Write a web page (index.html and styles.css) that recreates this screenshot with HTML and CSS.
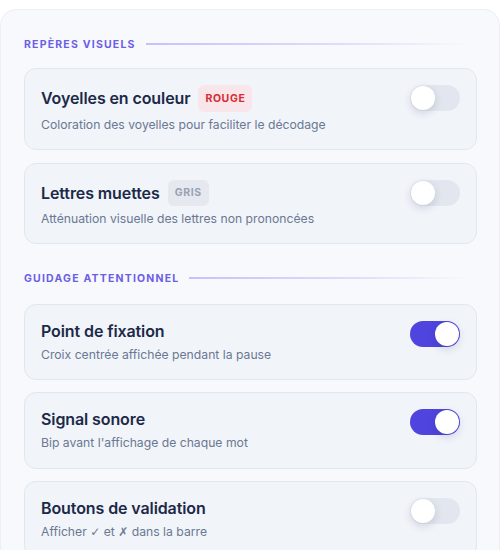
FILE: index.html
```html
<!DOCTYPE html>
<html lang="fr">
<head>
<meta charset="utf-8">
<link rel="stylesheet" href="styles.css">
</head>
<body>
<div class="panel">
  <div class="section-head section-first"><span class="section-title">Repères visuels</span><span class="section-line"></span></div>
  <div class="card">
    <div class="card-text">
      <div class="card-title-row"><span class="card-title">Voyelles en couleur</span><span class="badge badge-red">ROUGE</span></div>
      <div class="card-desc">Coloration des voyelles pour faciliter le décodage</div>
    </div>
    <span class="toggle"><span class="knob"></span></span>
  </div>
  <div class="card card-gap">
    <div class="card-text">
      <div class="card-title-row"><span class="card-title">Lettres muettes</span><span class="badge badge-grey">GRIS</span></div>
      <div class="card-desc">Atténuation visuelle des lettres non prononcées</div>
    </div>
    <span class="toggle"><span class="knob"></span></span>
  </div>

  <div class="section-head section-second"><span class="section-title">Guidage attentionnel</span><span class="section-line"></span></div>
  <div class="card">
    <div class="card-text">
      <div class="card-title-row"><span class="card-title">Point de fixation</span></div>
      <div class="card-desc">Croix centrée affichée pendant la pause</div>
    </div>
    <span class="toggle on"><span class="knob"></span></span>
  </div>
  <div class="card card-tall">
    <div class="card-text">
      <div class="card-title-row"><span class="card-title">Signal sonore</span></div>
      <div class="card-desc">Bip avant l'affichage de chaque mot</div>
    </div>
    <span class="toggle on"><span class="knob"></span></span>
  </div>
  <div class="card">
    <div class="card-text">
      <div class="card-title-row"><span class="card-title">Boutons de validation</span></div>
      <div class="card-desc">Afficher <span class="sym">✓</span> et <span class="sym">✗</span> dans la barre</div>
    </div>
    <span class="toggle"><span class="knob"></span></span>
  </div>
</div>
</body>
</html>
```
FILE: styles.css
```css
html, body {
  margin: 0;
  padding: 0;
  background: #ffffff;
  height: 550px;
  overflow: hidden;
}
body {
  padding-top: 9px;
  box-sizing: border-box;
  font-family: "Inter", "Noto Sans", sans-serif;
}
.panel {
  background: #f8f9fc;
  border: 1px solid #eceff5;
  border-radius: 16px;
  height: 560px;
  box-sizing: border-box;
  padding: 25px 22px 0 23px;
  display: flex;
  flex-direction: column;
  gap: 12px;
  overflow: hidden;
}
.section-head {
  display: flex;
  align-items: center;
  gap: 10px;
  height: 18px;
  flex-shrink: 0;
}
.section-first {
  margin-bottom: 3px;
}
.section-second {
  margin-top: 13px;
  margin-bottom: 5px;
}
.card-gap {
  margin-top: 1px;
}
.section-title {
  font-size: 10.5px;
  font-weight: 700;
  letter-spacing: 1.2px;
  text-transform: uppercase;
  color: #6c5ee6;
  white-space: nowrap;
}
.section-line {
  flex: 1;
  height: 2px;
  margin-right: 8px;
  background: linear-gradient(90deg, #c9c0fb 0%, #e1dcfb 60%, rgba(240, 238, 252, 0) 100%);
}
.card {
  background: #f1f4f9;
  border: 1px solid #e1e7ef;
  border-radius: 12px;
  padding: 16px;
  display: flex;
  align-items: flex-start;
  justify-content: space-between;
  flex-shrink: 0;
}
.card-tall {
  padding-bottom: 17px;
}
.card-text {
  display: flex;
  flex-direction: column;
  gap: 4px;
}
.card-title-row {
  display: flex;
  align-items: center;
  gap: 8px;
  min-height: 21px;
}
.card-title {
  font-size: 16px;
  line-height: 21px;
  font-weight: 560;
  color: #1c2948;
  letter-spacing: -0.1px;
}
.badge {
  font-size: 10.5px;
  font-weight: 700;
  letter-spacing: 0.6px;
  padding: 0 7px;
  height: 27px;
  line-height: 27px;
  border-radius: 6px;
}
.badge-red {
  background: #f8e6ea;
  color: #d92b34;
}
.badge-grey {
  background: #e5e9ef;
  color: #97a1b2;
  height: 26px;
  line-height: 26px;
}
.card-desc {
  font-size: 12.2px;
  color: #6a7892;
  line-height: 17px;
}
.sym {
  font-family: "DejaVu Sans", sans-serif;
  font-size: 12px;
}
.toggle {
  width: 50px;
  height: 26px;
  border-radius: 13px;
  background: #e2e6ee;
  position: relative;
  flex-shrink: 0;
}
.knob {
  position: absolute;
  top: 1px;
  left: 1px;
  width: 24px;
  height: 24px;
  border-radius: 50%;
  background: #ffffff;
  box-shadow: 0 3px 8px rgba(30, 40, 80, 0.16);
}
.toggle.on {
  background: #4f45de;
}
.toggle.on .knob {
  left: 25px;
}
```
